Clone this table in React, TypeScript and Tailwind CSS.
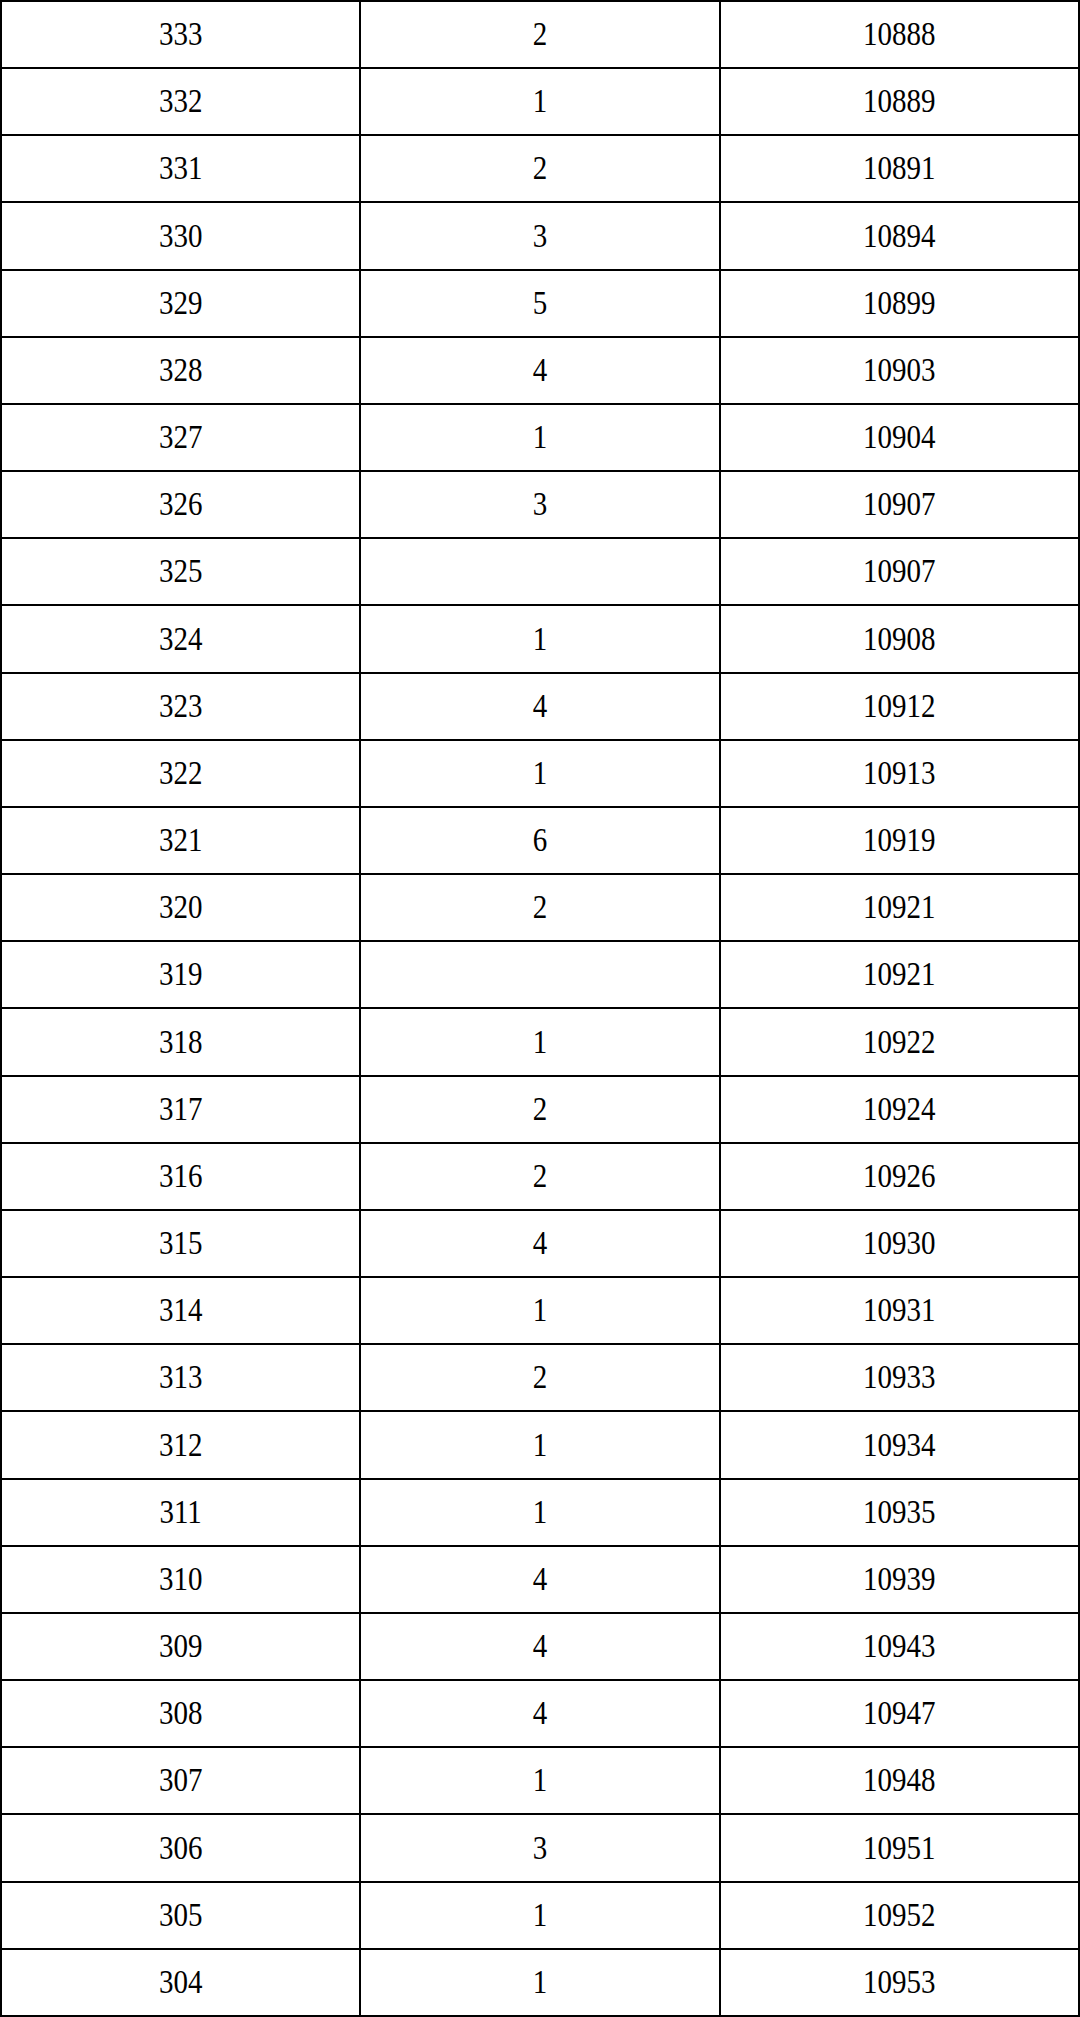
const rows: [number, string, number][] = [
  [333, "2", 10888],
  [332, "1", 10889],
  [331, "2", 10891],
  [330, "3", 10894],
  [329, "5", 10899],
  [328, "4", 10903],
  [327, "1", 10904],
  [326, "3", 10907],
  [325, "", 10907],
  [324, "1", 10908],
  [323, "4", 10912],
  [322, "1", 10913],
  [321, "6", 10919],
  [320, "2", 10921],
  [319, "", 10921],
  [318, "1", 10922],
  [317, "2", 10924],
  [316, "2", 10926],
  [315, "4", 10930],
  [314, "1", 10931],
  [313, "2", 10933],
  [312, "1", 10934],
  [311, "1", 10935],
  [310, "4", 10939],
  [309, "4", 10943],
  [308, "4", 10947],
  [307, "1", 10948],
  [306, "3", 10951],
  [305, "1", 10952],
  [304, "1", 10953],
];

function Cell({ value }: { value: string | number }) {
  return (
    <div className="flex items-center justify-center border-r-2 border-b-2 border-black">
      <span className="inline-block scale-y-115 text-[29px] leading-none text-black">
        {value}
      </span>
    </div>
  );
}

export default function App() {
  return (
    <div
      className="w-[1080px] h-[2017px] bg-white"
      style={{ fontFamily: '"Liberation Serif", "Noto Sans CJK SC", serif' }}
    >
      <div className="grid h-full grid-cols-3 grid-rows-30 border-t-2 border-l-2 border-black">
        {rows.map(([a, b, c]) => (
          <div key={a} className="contents">
            <Cell value={a} />
            <Cell value={b} />
            <Cell value={c} />
          </div>
        ))}
      </div>
    </div>
  );
}
